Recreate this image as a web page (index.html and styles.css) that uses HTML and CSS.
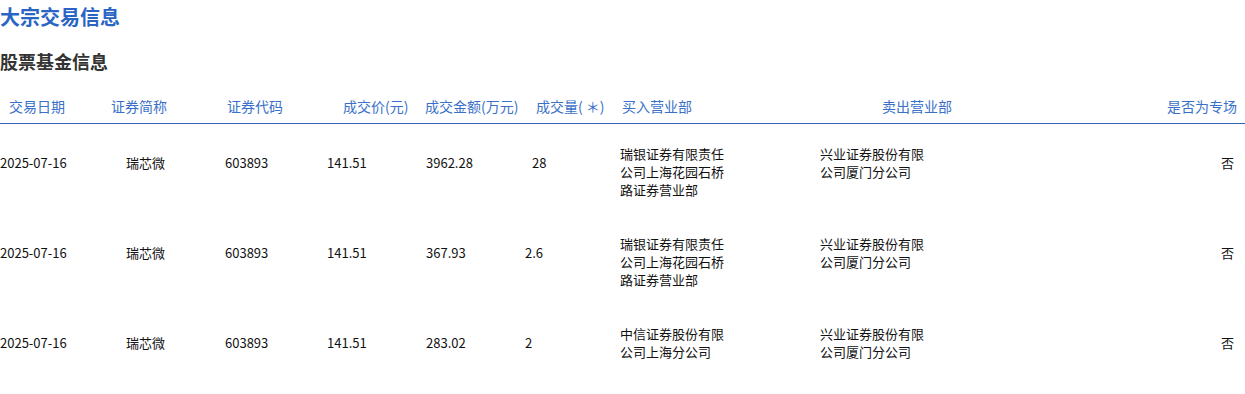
FILE: index.html
```html
<!DOCTYPE html>
<html lang="zh-CN">
<head>
<meta charset="utf-8">
<title>大宗交易信息</title>
<link rel="stylesheet" href="styles.css">
</head>
<body>
<h1 class="title">大宗交易信息</h1>
<h2 class="subtitle">股票基金信息</h2>
<div class="table">
  <div class="row head">
    <div class="c c1">交易日期</div>
    <div class="c c2">证券简称</div>
    <div class="c c3">证券代码</div>
    <div class="c c4">成交价(元)</div>
    <div class="c c5">成交金额(万元)</div>
    <div class="c c6">成交量( ＊)</div>
    <div class="c c7">买入营业部</div>
    <div class="c c8">卖出营业部</div>
    <div class="c c9">是否为专场</div>
  </div>
  <div class="row data">
    <div class="c c1">2025-07-16</div>
    <div class="c c2">瑞芯微</div>
    <div class="c c3">603893</div>
    <div class="c c4">141.51</div>
    <div class="c c5">3962.28</div>
    <div class="c c6 indent">28</div>
    <div class="c c7"><span class="dept">瑞银证券有限责任公司上海花园石桥路证券营业部</span></div>
    <div class="c c8"><span class="dept">兴业证券股份有限公司厦门分公司</span></div>
    <div class="c c9">否</div>
  </div>
  <div class="row data">
    <div class="c c1">2025-07-16</div>
    <div class="c c2">瑞芯微</div>
    <div class="c c3">603893</div>
    <div class="c c4">141.51</div>
    <div class="c c5">367.93</div>
    <div class="c c6">2.6</div>
    <div class="c c7"><span class="dept">瑞银证券有限责任公司上海花园石桥路证券营业部</span></div>
    <div class="c c8"><span class="dept">兴业证券股份有限公司厦门分公司</span></div>
    <div class="c c9">否</div>
  </div>
  <div class="row data">
    <div class="c c1">2025-07-16</div>
    <div class="c c2">瑞芯微</div>
    <div class="c c3">603893</div>
    <div class="c c4">141.51</div>
    <div class="c c5">283.02</div>
    <div class="c c6">2</div>
    <div class="c c7"><span class="dept">中信证券股份有限公司上海分公司</span></div>
    <div class="c c8"><span class="dept">兴业证券股份有限公司厦门分公司</span></div>
    <div class="c c9">否</div>
  </div>
</div>
</body>
</html>
```
FILE: styles.css
```css
* { box-sizing: border-box; }
body {
  margin: 0;
  font-family: "Noto Sans CJK SC", "Noto Sans", sans-serif;
  background: #fff;
  color: #111;
  width: 1245px;
}
.title {
  margin: 0;
  font-size: 20px;
  line-height: 34px;
  font-weight: 700;
  color: #2a65c5;
}
.subtitle {
  margin: 14px 0 0;
  font-size: 18px;
  line-height: 26px;
  font-weight: 700;
  color: #333;
}
.table { margin-top: 22px; }
.row {
  display: grid;
  grid-template-columns: 105px 110px 100px 100px 105px 92px 200px 188px 245px;
}
.head {
  font-size: 14px;
  line-height: 20px;
  color: #3a70c9;
  padding-bottom: 7px;
  border-bottom: 1px solid #2f62b8;
}
.head .c { white-space: nowrap; }
.head .c1 { padding-left: 9px; }
.head .c2 { padding-left: 6px; }
.head .c3 { padding-left: 12px; }
.head .c4 { padding-left: 28px; }
.head .c5 { padding-left: 10px; }
.head .c6 { padding-left: 16px; }
.head .c7 { padding-left: 10px; }
.head .c8 { padding-left: 70px; }
.head .c9 { text-align: right; padding-right: 8px; }

.data {
  height: 90px;
  padding-top: 21px;
  font-size: 13px;
  line-height: 18px;
  color: #111;
  align-items: start;
}
.data .c {
  height: 36px;
  display: flex;
  align-items: center;
}
.data .c7, .data .c8 { align-items: flex-start; }
.data .c1 { padding-left: 0; }
.data .c2 { padding-left: 21px; }
.data .c3 { padding-left: 10px; }
.data .c4 { padding-left: 12px; }
.data .c5 { padding-left: 11px; }
.data .c6 { padding-left: 5px; }
.data .c6.indent { padding-left: 12px; }
.data .c7 { padding-left: 8px; }
.data .c8 { padding-left: 8px; }
.data .c9 { justify-content: flex-end; padding-right: 11px; }
.dept {
  display: block;
  width: 105px;
}
```
